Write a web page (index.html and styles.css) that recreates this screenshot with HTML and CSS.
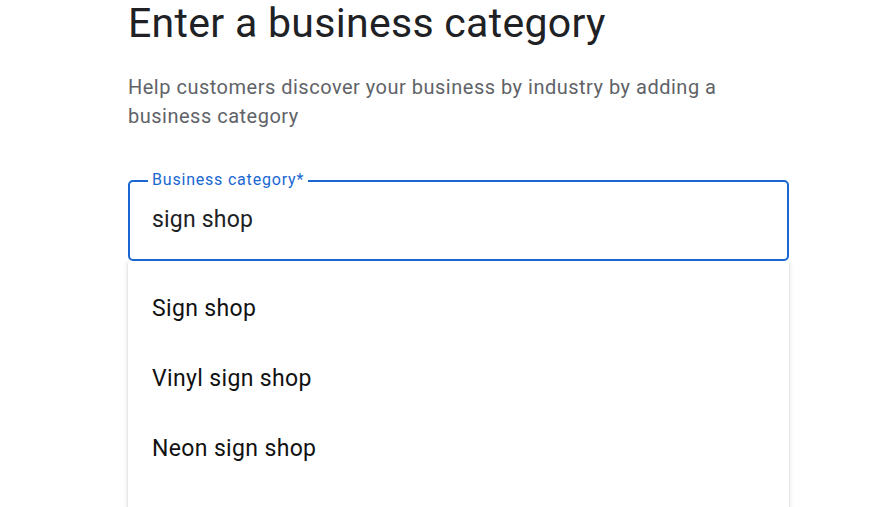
FILE: index.html
```html
<!DOCTYPE html>
<html lang="en">
<head>
  <meta charset="UTF-8" />
  <meta name="viewport" content="width=device-width, initial-scale=1" />
  <title>Business category</title>
  <link rel="stylesheet" href="styles.css">
</head>
<body>
  <main class="page">
    <h1 class="title">Enter a business category</h1>
    <p class="intro">Help customers discover your business by industry by adding a business category</p>

    <div class="field">
      <label class="field-label" for="category">Business category*</label>
      <input class="field-input" id="category" type="text" value="sign shop" />
    </div>

    <ul class="suggestions" role="listbox">
      <li class="suggestion">Sign shop</li>
      <li class="suggestion">Vinyl sign shop</li>
      <li class="suggestion">Neon sign shop</li>
      <li class="suggestion"></li>
    </ul>
  </main>
</body>
</html>
```

FILE: styles.css
```css
:root {
  --blue: #1a67d2;
  --text: #202124;
  --muted: #5f6368;
}

* {
  margin: 0;
  padding: 0;
  box-sizing: border-box;
}

html, body {
  height: 100%;
  overflow: hidden;
  background: #fff;
  font-family: Roboto, "Liberation Sans", Arial, sans-serif;
  color: var(--text);
}

.page {
  width: 661px;
  margin-left: 128px;
}

.title {
  font-size: 41px;
  font-weight: 400;
  line-height: 46px;
  letter-spacing: 0.3px;
}

.intro {
  margin-top: 27px;
  font-size: 20px;
  line-height: 29px;
  color: var(--muted);
  letter-spacing: 0.5px;
  width: 620px;
}

.field {
  position: relative;
  margin-top: 49px;
  border: 2px solid var(--blue);
  border-radius: 5px;
  padding: 24px 22px 25px;
}

.field-label {
  position: absolute;
  top: -12px;
  left: 18px;
  padding: 0 4px;
  background: #fff;
  font-size: 16px;
  line-height: 20px;
  color: var(--blue);
  letter-spacing: 0.8px;
}

.field-input {
  display: block;
  width: 100%;
  border: none;
  outline: none;
  font-family: inherit;
  font-size: 23px;
  line-height: 28px;
  height: 28px;
  color: var(--text);
  letter-spacing: 0.2px;
}

.suggestions {
  list-style: none;
  padding-top: 13px;
  box-shadow: 0 1px 3px rgba(60, 64, 67, 0.2), 0 2px 6px rgba(60, 64, 67, 0.1);
}

.suggestion {
  height: 70px;
  line-height: 70px;
  padding-left: 24px;
  font-size: 23px;
  color: #111;
  letter-spacing: 0.35px;
}
```
